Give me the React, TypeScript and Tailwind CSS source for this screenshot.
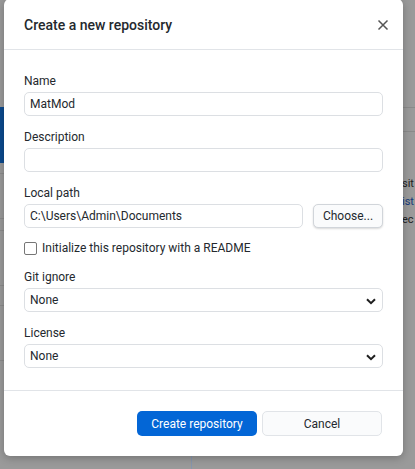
import React from "react";

const font = { fontFamily: 'Roboto, "Noto Sans", sans-serif' };

function Chevron() {
  return (
    <svg width="10" height="7" viewBox="0 0 10 7" className="absolute right-[6px] top-[9px]">
      <path d="M1 1.2 L5 5.2 L9 1.2" fill="none" stroke="#1f1f1f" strokeWidth="2" />
    </svg>
  );
}

function Select() {
  return (
    <div className="relative mt-1 flex h-6 items-center rounded-[5px] border border-[#dcdfe3] bg-white px-[5px] text-[12px] text-[#24292e]">
      None
      <Chevron />
    </div>
  );
}

function Label({ children }: { children: React.ReactNode }) {
  return <div className="h-4 pt-px text-[12px] leading-4 text-[#24292e]">{children}</div>;
}

export default function App() {
  return (
    <div className="relative h-[469px] w-[415px] overflow-hidden bg-[#9a9a9a]" style={font}>
      {/* dimmed app behind */}
      <div className="absolute left-0 top-[107px] h-[56px] w-[4px] bg-[#0c4a8e]" />
      <div className="absolute left-0 top-[173px] h-px w-[4px] bg-[#8c8c8c]" />
      <div className="absolute left-0 top-[218px] h-px w-[4px] bg-[#8c8c8c]" />
      <div className="absolute left-0 top-[230px] h-px w-[4px] bg-[#8c8c8c]" />
      <div className="absolute left-0 top-[285px] h-px w-[4px] bg-[#8c8c8c]" />
      <div className="absolute left-0 top-[305px] h-px w-[4px] bg-[#8c8c8c]" />
      <div className="absolute left-0 top-[360px] h-px w-[4px] bg-[#8c8c8c]" />
      <div className="absolute right-0 top-[107px] h-px w-[14px] bg-[#8a8a8a]" />
      <div className="absolute right-0 top-[131px] h-px w-[14px] bg-[#8a8a8a]" />
      <div className="absolute left-[402px] top-[175px] flex flex-col text-[11px] leading-[18px]">
        <span className="text-[#222]">sit</span>
        <span className="text-[#173a7a]">ist</span>
        <span className="text-[#222]">ec</span>
      </div>
      <div className="absolute left-[191px] top-[456px] h-[13px] w-px bg-[#8796ad]" />

      {/* dialog */}
      <div className="absolute left-[4px] top-[-1px] flex h-[457px] w-[399px] flex-col rounded-[6px] bg-white shadow-[0_2px_8px_rgba(0,0,0,0.25)]">
        <div className="flex h-[51px] shrink-0 items-center justify-between border-b border-[#e1e4e8] pl-5 pr-[14px]">
          <span className="pt-[2px] text-[14px] font-medium text-[#24292e]">Create a new repository</span>
          <svg width="12" height="12" viewBox="0 0 12 12" className="mt-[1px]">
            <path d="M1.5 1.5 L10.5 10.5 M10.5 1.5 L1.5 10.5" stroke="#555" strokeWidth="1.5" />
          </svg>
        </div>

        <div className="flex flex-col gap-3 px-5 pb-[22px] pt-[22px]">
          <div>
            <Label>Name</Label>
            <div className="mt-1 flex h-6 items-center rounded-[5px] border border-[#dcdfe3] px-[5px] text-[12px] text-[#24292e]">
              MatMod
            </div>
          </div>
          <div>
            <Label>Description</Label>
            <div className="mt-1 h-6 rounded-[5px] border border-[#dcdfe3]" />
          </div>
          <div>
            <Label>Local path</Label>
            <div className="mt-1 flex gap-[10px]">
              <div className="flex h-6 flex-1 items-center rounded-[5px] border border-[#dcdfe3] px-[5px] text-[12px] text-[#24292e]">
                C:\Users\Admin\Documents
              </div>
              <div className="flex h-6 w-[70px] items-center justify-center rounded-[5px] border border-[#d1d5da] bg-[#fafbfc] text-[12px] text-[#24292e] shadow-[0_1px_2px_rgba(0,0,0,0.15)]">
                Choose...
              </div>
            </div>
          </div>
          <div className="flex h-4 items-center gap-[5px]">
            <div className="h-[13px] w-[13px] rounded-[2px] border border-[#767676] bg-white" />
            <span className="text-[12px] text-[#24292e]">Initialize this repository with a README</span>
          </div>
          <div>
            <Label>Git ignore</Label>
            <Select />
          </div>
          <div>
            <Label>License</Label>
            <Select />
          </div>
        </div>

        <div className="flex justify-end gap-[5px] border-t border-[#e1e4e8] pl-5 pr-[21px] pt-5">
          <div className="flex h-[25px] w-[120px] items-center justify-center rounded-[5px] bg-[#0366d6] text-[12px] text-white">
            Create repository
          </div>
          <div className="flex h-[25px] w-[120px] items-center justify-center rounded-[5px] border border-[#e1e4e8] bg-[#fafbfc] text-[12px] text-[#24292e]">
            Cancel
          </div>
        </div>
      </div>
    </div>
  );
}
